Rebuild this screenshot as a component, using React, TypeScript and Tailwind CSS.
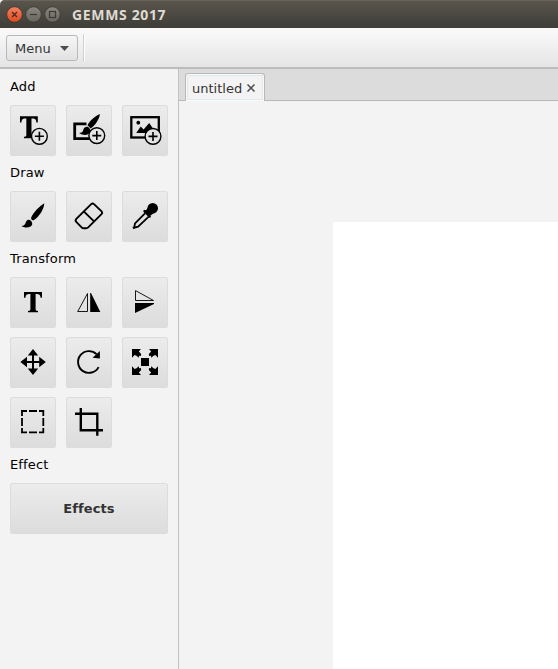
import type { ReactNode } from "react";

const Plus = ({ x, y }: { x: number; y: number }) => (
  <g>
    <circle cx={x} cy={y} r="7.9" fill="#e4e4e4" stroke="#000" strokeWidth="1.4" />
    <path d={`M${x - 4.5} ${y}h9M${x} ${y - 4.5}v9`} stroke="#000" strokeWidth="1.6" />
  </g>
);

const T_PATH = "M0 0H18V5.8H16.6C16.2 2.8 15.2 2.1 12.8 2.1H11.6V17.2C11.6 18.4 12.2 18.7 14 18.9V20.3H4V18.9C5.8 18.7 6.4 18.4 6.4 17.2V2.1H5.2C2.8 2.1 1.8 2.8 1.4 5.8H0Z";
const CORNER = "M10 12H19L16.8 14.5L19.2 17L18.8 19L17 18.7L16.8 20.8L14.5 18.8L12.6 18L10 20.8Z";

function Tool({ label, children }: { label: string; children: ReactNode }) {
  return (
    <button
      aria-label={label}
      className="h-[51px] w-[46px] rounded-[3px] bg-linear-to-b from-[#ececec] to-[#dcdcdc] shadow-[inset_0_0_0_1px_#dcdcdc]"
    >
      <svg width="46" height="51" viewBox="0 0 46 51" fill="#000" className="block">
        {children}
      </svg>
    </button>
  );
}

const Heading = ({ children }: { children: ReactNode }) => (
  <h2 className="h-[35px] pt-[8px] text-[13px] leading-[18px] tracking-[.15px] text-black">{children}</h2>
);

const Row = ({ children }: { children: ReactNode }) => <div className="flex gap-[10px]">{children}</div>;

export default function App() {
  return (
    <div className="flex h-[669px] w-[558px] flex-col overflow-hidden bg-[#f3f3f3] font-['DejaVu_Sans',sans-serif] text-[13px]">
      <header className="flex h-[28px] shrink-0 items-center rounded-tl-[5px] bg-linear-to-b from-[#5a564d] to-[#3e3d38] pl-[6px] shadow-[inset_0_1px_0_#68645b]">
        <svg width="56" height="18" viewBox="0 0 56 18" fill="none">
          <defs>
            <linearGradient id="close" x1="0" y1="0" x2="0" y2="1">
              <stop stopColor="#f58260" />
              <stop offset="1" stopColor="#df4a1c" />
            </linearGradient>
            <linearGradient id="control" x1="0" y1="0" x2="0" y2="1">
              <stop stopColor="#8c897f" />
              <stop offset="1" stopColor="#66645c" />
            </linearGradient>
          </defs>
          <circle cx="8.5" cy="9.5" r="7.8" fill="url(#close)" stroke="#35332f" strokeWidth=".8" />
          <circle cx="27.5" cy="9.5" r="7.8" fill="url(#control)" stroke="#35332f" strokeWidth=".8" />
          <circle cx="46.5" cy="9.5" r="7.8" fill="url(#control)" stroke="#35332f" strokeWidth=".8" />
          <path d="M6 7l5 5M11 7l-5 5" stroke="#4b2a1f" strokeWidth="1.3" />
          <path d="M24 9.5h7" stroke="#3c3b37" strokeWidth="1.2" />
          <rect x="43.5" y="6.5" width="6" height="6" stroke="#3c3b37" strokeWidth="1.2" />
        </svg>
        <h1 className="ml-[10px] pt-[2px] font-['Noto_Sans',sans-serif] text-[14px] leading-[20px] font-bold tracking-[.65px] text-[#dfdbd2]">GEMMS 2017</h1>
      </header>

      <nav className="flex h-[41px] shrink-0 items-start border-b-2 border-[#bcbcbc] bg-linear-to-b from-[#fafafa] to-[#e5e5e5] pt-[7px] pl-[6px]">
        <button className="flex h-[26px] w-[72px] items-center rounded-[3px] border border-[#b8b8b8] bg-linear-to-b from-[#f6f6f6] to-[#e2e2e2] pl-[8px] text-[#333]">
          <span className="pt-[2px]">Menu</span>
          <svg width="9" height="5" viewBox="0 0 9 5" className="ml-[9px]">
            <path d="M0 0h9L4.5 5z" fill="#4d4d4d" />
          </svg>
        </button>
        <div className="-mt-px ml-[5px] h-[28px] w-[2px] border-r border-l border-r-white border-l-[#cfcfcf]" />
      </nav>

      <div className="flex min-h-0 flex-1">
        <aside className="w-[179px] shrink-0 border-r border-[#c2c2c2] pt-px pl-[10px]">
          <Heading>Add</Heading>
          <Row>
            <Tool label="Add text">
              <path d={T_PATH} transform="translate(10 11.3) scale(.99 1.08)" />
              <Plus x={29.4} y={31.3} />
            </Tool>
            <Tool label="Add drawing">
              <path d="M20.5 18.9H8.7V33.7H27" fill="none" stroke="#000" strokeWidth="2.8" />
              <path d="M33.9 9C30 10.5 23.5 15.5 21.5 20.2L24.8 23.4C29.5 20 33.4 14 33.9 9Z" />
              <path d="M21.5 21.8C18 21.8 17.6 24 17 26C16.5 27.3 15 27.8 13 28C17 30.8 22.5 30.8 24 27C24.7 25 23.5 22.5 21.5 21.8Z" />
              <Plus x={30.8} y={30.6} />
            </Tool>
            <Tool label="Add image">
              <rect x="9.3" y="12.2" width="27.5" height="20.3" fill="none" stroke="#000" strokeWidth="2.3" />
              <circle cx="16.3" cy="17.7" r="1.9" />
              <path d="M14.2 28L18.7 21.4L21.6 24.4L27.2 18L32 25V28Z" />
              <Plus x={31} y={31.4} />
            </Tool>
          </Row>
          <Heading>Draw</Heading>
          <Row>
            <Tool label="Brush">
              <path d="M34.3 12.3C30 15 23.5 21 21.3 26.2C20.7 28.5 22.2 30 24 28.9C29.5 25.5 34 18 34.3 12.3Z" />
              <path d="M19 28.7C16.2 28.7 15.9 31.3 15.1 33C14.5 34.3 13.2 34.8 11.6 35C14 37.2 21.3 37.2 22.2 33.5C22.7 31.3 21 29.1 19 28.7Z" />
            </Tool>
            <Tool label="Eraser">
              <path d="M25.2 13.1Q26.6 11.8 28 13.1L35.6 20.4Q36.8 21.8 35.5 23.2L22.2 36.4Q21.4 37.2 20 37.2H17.8Q16.5 37.2 15.6 36.3L10.5 31.2Q8.8 29.5 10.3 27.9ZM18 20.6L28.3 30.6" fill="none" stroke="#000" strokeWidth="1.9" />
            </Tool>
            <Tool label="Color picker">
              <path d="M23 22.3L13 32.4L12.2 36.7L16.1 35.6L26.7 25.6" fill="none" stroke="#000" strokeWidth="1.8" />
              <circle cx="30.7" cy="17.3" r="5.3" />
              <path d="M26.5 16L32 22L28.5 24.5L29 26.3L27.3 26.8L21.3 20.8L21.8 18.8L24 19.3Z" />
              <path d="M10.9 35.5L12.8 37.3L11.8 38L10.5 36.7Z" />
            </Tool>
          </Row>
          <Heading>Transform</Heading>
          <div className="flex flex-col gap-[9px]">
            <Row>
              <Tool label="Transform text">
                <path d={T_PATH} transform="translate(14 15)" />
              </Tool>
              <Tool label="Flip horizontally">
                <path d="M21.5 16.5V34.5H11.7Z" fill="none" stroke="#000" strokeWidth=".9" />
                <path d="M24.2 16H25L34.3 35H24.2Z" />
              </Tool>
              <Tool label="Flip vertically">
                <path d="M13.5 13.6V23.5H31.5Z" fill="none" stroke="#000" strokeWidth=".9" />
                <path d="M13 26H32V27L13 36Z" />
              </Tool>
            </Row>
            <Row>
              <Tool label="Move">
                <path d="M23 17V33M15 25H31" stroke="#000" strokeWidth="2" />
                <path d="M23 12L28.2 18.5H17.8ZM23 38L28.2 31.5H17.8ZM10.4 25L17 19.8V30.2ZM35.8 25L29.2 19.8V30.2Z" />
              </Tool>
              <Tool label="Rotate">
                <path d="M32.6 30.1A10.9 10.9 0 1 1 30.5 17.1" fill="none" stroke="#000" strokeWidth="1.9" />
                <path d="M33.9 14V21.5L26.6 20.8Z" />
              </Tool>
              <Tool label="Scale">
                <rect x="19" y="21" width="8" height="8" />
                <path d={CORNER} />
                <path d={CORNER} transform="matrix(-1 0 0 1 46 0)" />
                <path d={CORNER} transform="matrix(1 0 0 -1 0 50)" />
                <path d={CORNER} transform="matrix(-1 0 0 -1 46 50)" />
              </Tool>
            </Row>
            <Row>
              <Tool label="Select">
                <path d="M11 14H17M19 14H27M29 14H34M11 35.3H17M19 35.3H27M29 35.3H34M12 13V19M12 21V29M12 31V36M33.3 13V19M33.3 21V29M33.3 31V36" stroke="#000" strokeWidth="1.8" />
              </Tool>
              <Tool label="Crop">
                <path d="M9 16.7H31.3V38.8M14.8 11V33.2H37" fill="none" stroke="#000" strokeWidth="2.4" />
              </Tool>
            </Row>
          </div>
          <Heading>Effect</Heading>
          <button className="h-[51px] w-[158px] rounded-[3px] bg-linear-to-b from-[#ececec] to-[#dcdcdc] font-bold tracking-[.1px] text-[#333] shadow-[inset_0_0_0_1px_#dcdcdc]">
            Effects
          </button>
        </aside>

        <main className="flex min-w-0 flex-1 flex-col">
          <div className="flex h-[32px] shrink-0 items-end border-b border-[#b8b8b8] bg-[#dcdcdc] pl-[6px]">
            <div className="-mb-px flex h-[28px] w-[80px] items-center rounded-t-[3px] border border-b-0 border-[#b8b8b8] bg-[#f3f3f3] pl-[6px] text-[#333] shadow-[inset_0_0_0_1px_#fafafa,inset_0_0_0_2px_#dfe8ec]">
              <span className="pt-[2px]">untitled</span>
              <svg width="8" height="8" viewBox="0 0 8 8" className="ml-[5px]">
                <path d="M.5 .5l7 7M7.5 .5l-7 7" stroke="#4a4a4a" strokeWidth="1.5" />
              </svg>
            </div>
          </div>
          <div className="min-h-0 flex-1 pt-[121px] pl-[154px]">
            <div className="h-full bg-white" />
          </div>
        </main>
      </div>
    </div>
  );
}
